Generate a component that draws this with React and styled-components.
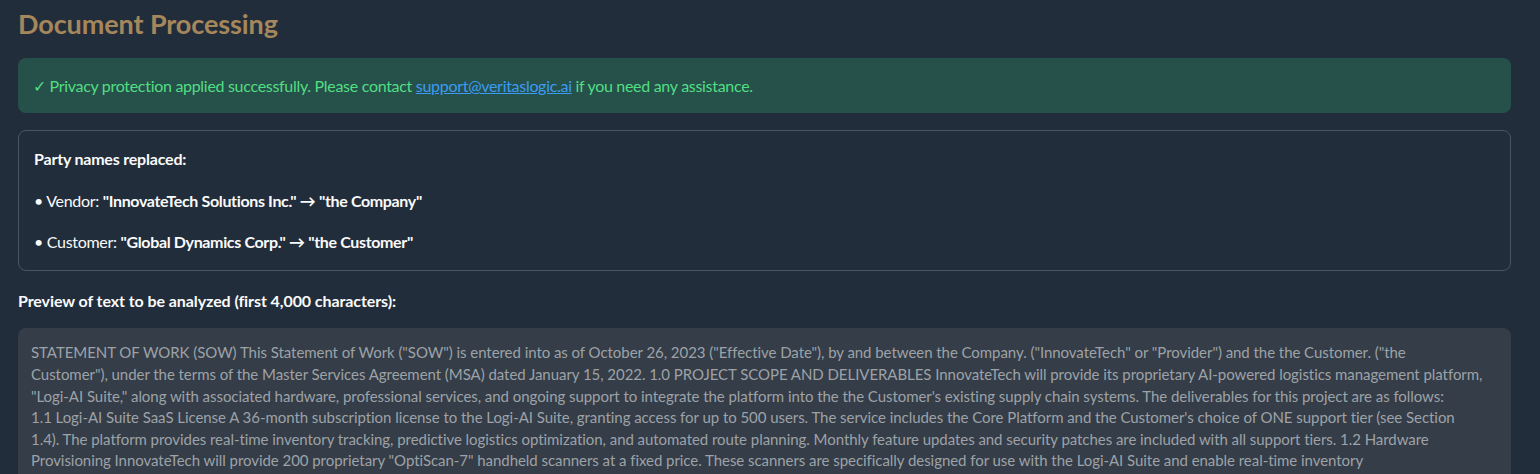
import React from "react";
import styled, { createGlobalStyle } from "styled-components";

const GlobalStyle = createGlobalStyle`
  html, body {
    margin: 0;
    padding: 0;
    background: #222d3b;
  }
  body {
    font-family: Lato, "Noto Sans", sans-serif;
    color: #fafafa;
    -webkit-font-smoothing: antialiased;
  }
`;

const Page = styled.main`
  padding: 4px 29px 0 18px;
  display: flex;
  flex-direction: column;
`;

const Title = styled.h1`
  margin: 0 0 14px;
  font-family: Lato, sans-serif;
  font-size: 27px;
  font-weight: 700;
  line-height: 40px;
  color: #a5875c;
  letter-spacing: -0.1px;
`;

const Alert = styled.div`
  background: #26514a;
  border-radius: 8px;
  padding: 15px 15px;
  font-size: 16px;
  line-height: 25px;
  letter-spacing: -0.3px;
  color: #52de83;
`;

const Link = styled.a`
  color: #3c9bf2;
  text-decoration: underline;
`;

const Card = styled.section`
  margin-top: 17px;
  border: 1px solid #4a5462;
  border-radius: 8px;
  padding: 15px 15px;
  display: flex;
  flex-direction: column;
  gap: 16px;
`;

const Line = styled.p`
  margin: 0;
  font-size: 16px;
  line-height: 25.6px;
  letter-spacing: ${(p) => (p.$bold ? "-0.2px" : "-0.3px")};
  color: #fafafa;
  font-weight: ${(p) => (p.$bold ? 700 : 400)};
`;

const Strong = styled.strong`
  font-weight: 700;
  letter-spacing: -0.35px;
`;

const Label = styled.div`
  margin-top: 17px;
  font-size: 16px;
  font-weight: 700;
  line-height: 25.6px;
  letter-spacing: -0.08px;
  color: #fafafa;
`;

const Preview = styled.div`
  margin-top: 15px;
  background: #343d48;
  border-radius: 8px;
  padding: 14px 23px 14px 13px;
  height: 200px;
  overflow: hidden;
  font-size: 15px;
  line-height: 21.6px;
  letter-spacing: -0.05px;
  color: #9ea2a7;
`;

const PreviewLine = styled.span`
  display: block;
  white-space: nowrap;
`;

const previewLines = [
  `STATEMENT OF WORK (SOW) This Statement of Work ("SOW") is entered into as of October 26, 2023 ("Effective Date"), by and between the Company. ("InnovateTech" or "Provider") and the the Customer. ("the`,
  `Customer"), under the terms of the Master Services Agreement (MSA) dated January 15, 2022. 1.0 PROJECT SCOPE AND DELIVERABLES InnovateTech will provide its proprietary AI-powered logistics management platform,`,
  `"Logi-AI Suite," along with associated hardware, professional services, and ongoing support to integrate the platform into the the Customer's existing supply chain systems. The deliverables for this project are as follows:`,
  `1.1 Logi-AI Suite SaaS License A 36-month subscription license to the Logi-AI Suite, granting access for up to 500 users. The service includes the Core Platform and the Customer's choice of ONE support tier (see Section`,
  `1.4). The platform provides real-time inventory tracking, predictive logistics optimization, and automated route planning. Monthly feature updates and security patches are included with all support tiers. 1.2 Hardware`,
  `Provisioning InnovateTech will provide 200 proprietary "OptiScan-7" handheld scanners at a fixed price. These scanners are specifically designed for use with the Logi-AI Suite and enable real-time inventory`,
];

export default function App() {
  return (
    <>
      <GlobalStyle />
      <Page>
        <Title>Document Processing</Title>
        <Alert>
          ✓ Privacy protection applied successfully. Please contact{" "}
          <Link href="mailto:support@veritaslogic.ai">support@veritaslogic.ai</Link> if you need any
          assistance.
        </Alert>
        <Card>
          <Line $bold>Party names replaced:</Line>
          <Line>
            • Vendor: <Strong>"InnovateTech Solutions Inc." → "the Company"</Strong>
          </Line>
          <Line>
            • Customer: <Strong>"Global Dynamics Corp." → "the Customer"</Strong>
          </Line>
        </Card>
        <Label>Preview of text to be analyzed (first 4,000 characters):</Label>
        <Preview>
          {previewLines.map((text, i) => (
            <PreviewLine key={i}>{text}</PreviewLine>
          ))}
        </Preview>
      </Page>
    </>
  );
}
